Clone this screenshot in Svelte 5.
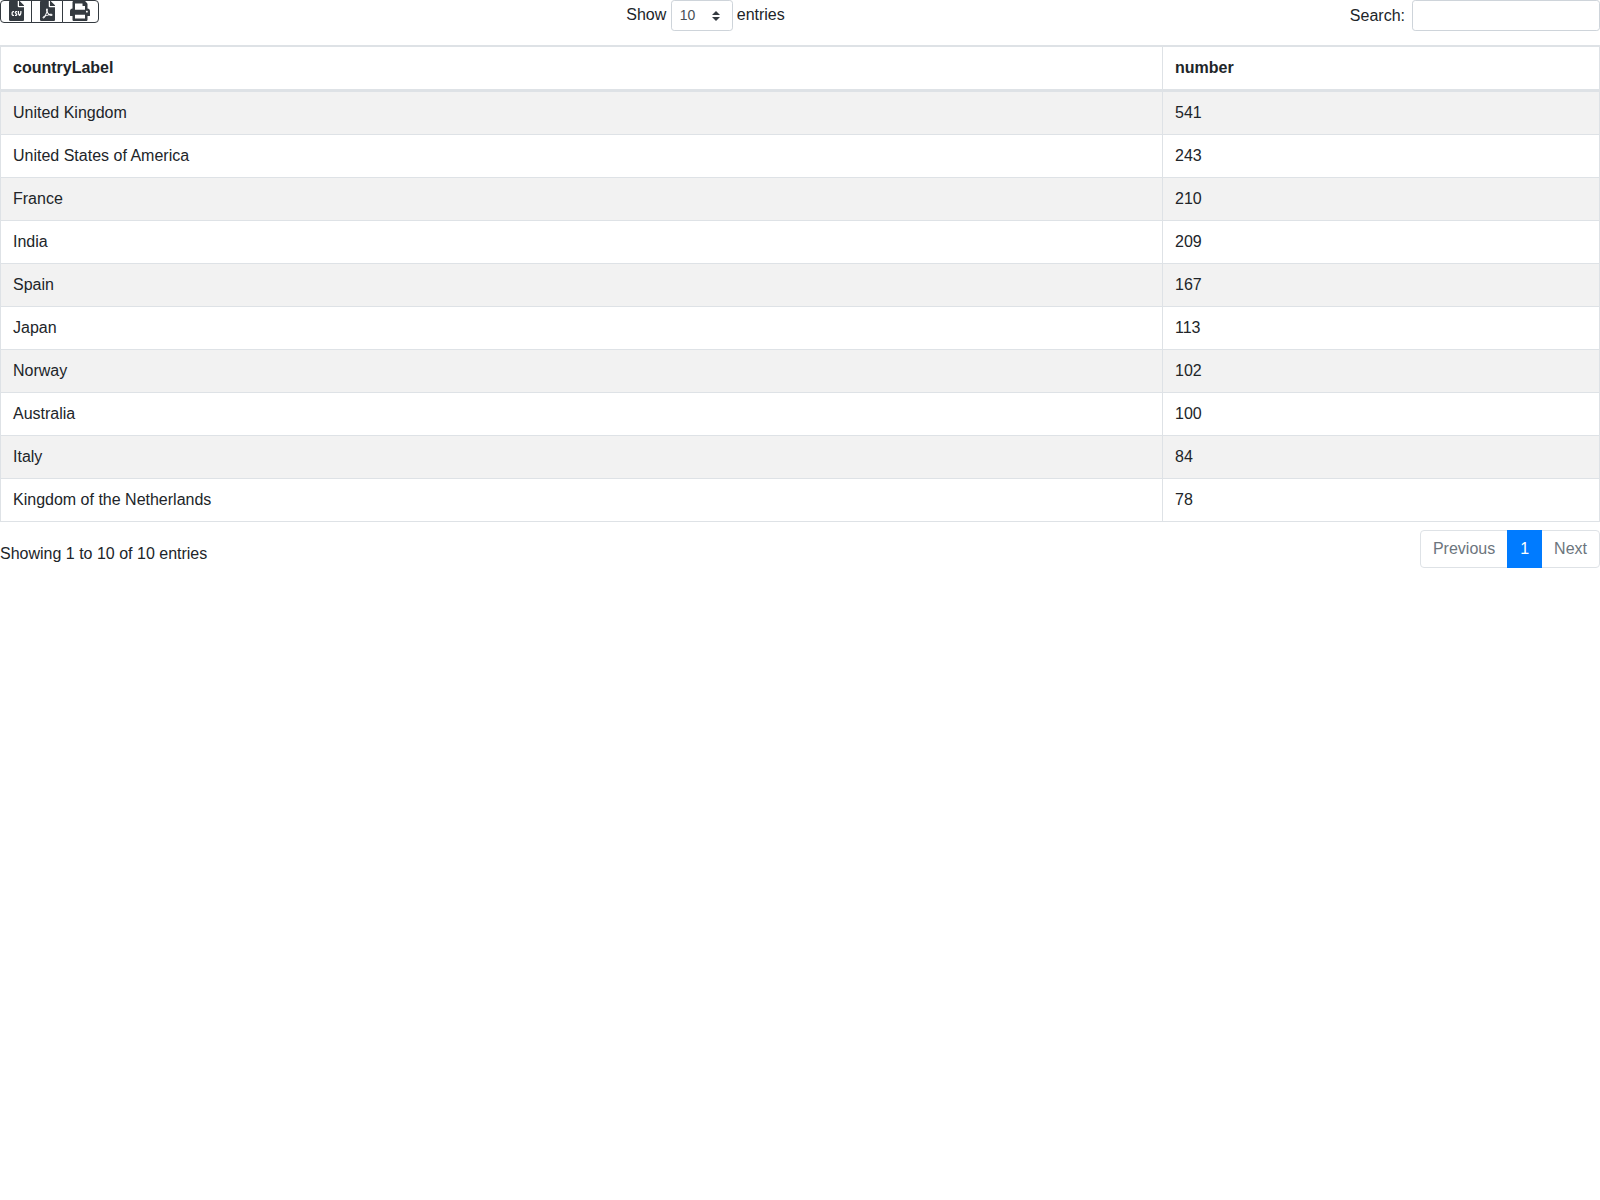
<script>
  const rows = [
    ['United Kingdom', 541],
    ['United States of America', 243],
    ['France', 210],
    ['India', 209],
    ['Spain', 167],
    ['Japan', 113],
    ['Norway', 102],
    ['Australia', 100],
    ['Italy', 84],
    ['Kingdom of the Netherlands', 78]
  ];
</script>

<div class="wrapper">
  <div class="toolbar">
    <div class="btn-group">
      <button class="btn" aria-label="CSV">
        <svg class="file" viewBox="0 0 384 512"><path d="M224 136V0H24C10.7 0 0 10.7 0 24v464c0 13.3 10.7 24 24 24h336c13.3 0 24-10.7 24-24V160H248c-13.2 0-24-10.8-24-24zm-96 144c0 4.42-3.58 8-8 8h-8c-8.84 0-16 7.16-16 16v32c0 8.84 7.16 16 16 16h8c4.42 0 8 3.58 8 8v16c0 4.42-3.58 8-8 8h-8c-26.51 0-48-21.49-48-48v-32c0-26.51 21.49-48 48-48h8c4.42 0 8 3.58 8 8v16zm44.27 104H160c-4.42 0-8-3.58-8-8v-16c0-4.42 3.58-8 8-8h12.27c5.95 0 10.41-3.5 10.41-6.62 0-1.3-.75-2.66-2.12-3.84l-21.89-18.77c-8.47-7.22-13.33-17.48-13.33-28.14 0-21.3 19.02-38.62 42.41-38.62H200c4.42 0 8 3.58 8 8v16c0 4.42-3.58 8-8 8h-12.27c-5.95 0-10.41 3.5-10.41 6.62 0 1.3.75 2.66 2.12 3.84l21.89 18.77c8.47 7.22 13.33 17.48 13.33 28.14.01 21.29-19 38.62-42.39 38.62zM256 264v20.8c0 20.27 5.7 40.17 16 56.88 10.3-16.7 16-36.61 16-56.88V264c0-4.42 3.58-8 8-8h16c4.42 0 8 3.58 8 8v20.8c0 35.48-12.88 68.89-36.28 94.09-3.02 3.25-7.27 5.11-11.72 5.11s-8.7-1.86-11.72-5.11c-23.4-25.2-36.28-58.61-36.28-94.09V264c0-4.42 3.58-8 8-8h16c4.42 0 8 3.58 8 8zm121-159L279.1 7c-4.5-4.5-10.6-7-17-7H256v128h128v-6.1c0-6.3-2.5-12.4-7-16.9z"/></svg>
      </button>
      <button class="btn" aria-label="PDF">
        <svg class="file" viewBox="0 0 384 512"><path d="M181.9 256.1c-5-16-4.9-46.9-2-46.9 8.4 0 7.6 36.9 2 46.9zm-1.7 47.2c-7.7 20.2-17.3 43.3-28.4 62.7 18.3-7 39-17.2 62.9-21.9-12.7-9.6-24.9-23.4-34.5-40.8zM86.1 428.1c0 .8 13.2-5.4 34.9-40.2-6.7 6.3-29.1 24.5-34.9 40.2zM248 160h136v328c0 13.3-10.7 24-24 24H24c-13.3 0-24-10.7-24-24V24C0 10.7 10.7 0 24 0h200v136c0 13.2 10.8 24 24 24zm-8 171.8c-20-12.2-33.3-29-42.7-53.8 4.5-18.5 11.6-46.6 6.2-64.2-4.7-29.4-42.4-26.5-47.8-6.8-5 18.3-.4 44.1 8.1 77-11.6 27.6-28.7 64.6-40.8 85.8-.1 0-.1.1-.2.1-27.1 13.9-73.6 44.5-54.5 68 5.6 6.9 16 10 21.5 10 17.9 0 35.7-18 61.1-61.8 25.8-8.5 54.1-19.1 79-23.2 21.7 11.8 47.1 19.5 64 19.5 29.2 0 31.2-32 19.7-43.4-13.9-13.6-54.3-9.7-73.5-7.2zM377 105L279 7c-4.5-4.5-10.6-7-17-7h-6v128h128v-6.1c0-6.3-2.5-12.4-7-16.9zm-74.1 255.3c4.1-2.7-2.5-11.9-42.8-9 37.1 15.8 42.8 9 42.8 9z"/></svg>
      </button>
      <button class="btn" aria-label="Print">
        <svg class="print" viewBox="0 0 512 512"><path d="M448 192V77.25c0-8.49-3.37-16.62-9.37-22.63L393.37 9.37c-6-6-14.14-9.37-22.63-9.37H96C78.33 0 64 14.33 64 32v160c-35.35 0-64 28.65-64 64v112c0 8.84 7.16 16 16 16h48v96c0 17.67 14.33 32 32 32h320c17.67 0 32-14.33 32-32v-96h48c8.84 0 16-7.16 16-16V256c0-35.35-28.65-64-64-64zm-64 256H128v-96h256v96zm0-224H128V64h192v48c0 8.84 7.16 16 16 16h48v96zm48 72c-13.25 0-24-10.75-24-24 0-13.26 10.75-24 24-24s24 10.74 24 24c0 13.25-10.75 24-24 24z"/></svg>
      </button>
    </div>

    <div class="length">
      <span>Show</span>
      <span class="select-wrap">
        <select>
          <option>10</option>
          <option>25</option>
          <option>50</option>
          <option>100</option>
        </select>
        <svg class="arrows" viewBox="0 0 4 5"><path d="M2 0L0 2h4zm0 5L0 3h4z"/></svg>
      </span>
      <span class="entries">entries</span>
    </div>

    <label class="search">
      <span>Search:</span>
      <input type="search" />
    </label>
  </div>

  <table>
    <thead>
      <tr>
        <th class="c1">countryLabel</th>
        <th>number</th>
      </tr>
    </thead>
    <tbody>
      {#each rows as row}
        <tr>
          <td>{row[0]}</td>
          <td>{row[1]}</td>
        </tr>
      {/each}
    </tbody>
  </table>

  <div class="footer">
    <div class="info">Showing 1 to 10 of 10 entries</div>
    <ul class="pagination">
      <li class="page first">Previous</li>
      <li class="page active">1</li>
      <li class="page last">Next</li>
    </ul>
  </div>
</div>

<style>
  :global(body) {
    margin: 0;
    background: #fff;
    color: #212529;
    font-family: "Liberation Sans", Arial, sans-serif;
    font-size: 16px;
    line-height: 1.5;
  }

  .toolbar {
    display: grid;
    grid-template-columns: 410.5px 590px 1fr;
    align-items: start;
    height: 45px;
  }

  .btn-group {
    display: flex;
  }

  .btn {
    display: flex;
    justify-content: center;
    height: 23px;
    margin: 0 0 0 -1px;
    padding: 0 7px 0 8px;
    border: 1px solid #343a40;
    background: #fff;
    color: #212529;
  }

  .btn:first-child {
    margin-left: 0;
    border-radius: 4px 0 0 4px;
  }

  .btn:last-child {
    padding: 0 8px 0 7px;
    border-radius: 0 4px 4px 0;
  }

  .btn svg {
    display: block;
    height: 20px;
    margin-top: -0.5px;
    fill: #343a40;
  }

  .file {
    width: 15px;
  }

  .print {
    width: 20px;
  }

  .length {
    display: flex;
    justify-content: center;
    align-items: flex-start;
    gap: 4.45px;
    line-height: 30px;
  }

  .entries {
    margin-left: -0.4px;
  }

  .select-wrap {
    position: relative;
    display: block;
    height: 31px;
  }

  select {
    display: block;
    width: 62px;
    height: 31px;
    padding: 4px 24px 4px 8px;
    border: 1px solid #ced4da;
    border-radius: 3.2px;
    background: #fff;
    color: #495057;
    font-family: inherit;
    font-size: 14px;
    line-height: 1.5;
    appearance: none;
  }

  .arrows {
    position: absolute;
    top: 11px;
    right: 13px;
    width: 8px;
    height: 10px;
    fill: #343a40;
    pointer-events: none;
  }

  .search {
    display: flex;
    justify-content: flex-end;
    align-items: flex-start;
    gap: 7px;
    line-height: 31px;
  }

  input {
    display: block;
    box-sizing: border-box;
    width: 188px;
    height: 31px;
    padding: 4px 8px;
    border: 1px solid #ced4da;
    border-radius: 3.2px;
    background: #fff;
    font-size: 14px;
    appearance: none;
  }

  table {
    width: 100%;
    border-collapse: collapse;
    table-layout: fixed;
  }

  th, td {
    padding: 9px 12px;
    border: 1px solid #dee2e6;
    text-align: left;
  }

  th {
    padding: 9px 12px;
    font-weight: 700;
    border-top-width: 2px;
    border-bottom-width: 3px;
  }

  .c1 {
    width: 1162px;
    box-sizing: border-box;
  }

  tbody tr:nth-child(odd) {
    background: #f2f2f2;
  }

  .footer {
    display: flex;
    justify-content: space-between;
    align-items: flex-start;
    margin-top: 8px;
  }

  .info {
    padding-top: 11.6px;
  }

  .pagination {
    display: flex;
    margin: 0;
    padding: 0;
    list-style: none;
  }

  .page {
    margin-left: -1px;
    padding: 6px 12px;
    border: 1px solid #dee2e6;
    color: #6c757d;
  }

  .first {
    margin-left: 0;
    border-radius: 4px 0 0 4px;
  }

  .last {
    border-radius: 0 4px 4px 0;
  }

  .active {
    position: relative;
    border-color: #007bff;
    background: #007bff;
    color: #fff;
  }
</style>
